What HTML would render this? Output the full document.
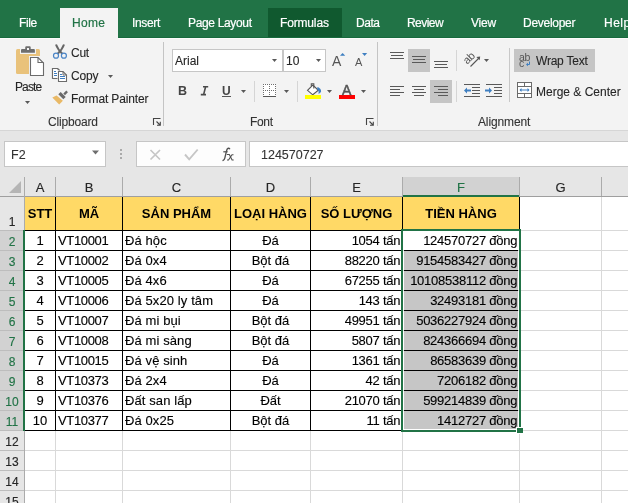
<!DOCTYPE html>
<html><head><meta charset="utf-8">
<style>
*{margin:0;padding:0;box-sizing:border-box}
html,body{width:628px;height:503px;overflow:hidden;background:#e6e6e6;font-family:"Liberation Sans",sans-serif;position:relative}
#wrap{position:absolute;left:0;top:0;width:628px;height:503px;will-change:transform}
.a{position:absolute}
#tabs{left:0;top:0;width:628px;height:38px;background:#217346}
.tab{position:absolute;top:18px;color:#fff;font-size:12px;line-height:10px;white-space:nowrap;-webkit-text-stroke-width:0.2px}
#ribbon{left:0;top:38px;width:628px;height:93px;background:#f3f3f3;border-bottom:1px solid #d6d6d6}
.t{position:absolute;color:#262626;font-size:12px;line-height:10px;white-space:nowrap;-webkit-text-stroke-width:0.1px}
.g{position:absolute;color:#333;font-size:12px;line-height:10px;white-space:nowrap;-webkit-text-stroke-width:0.1px}
.cell{position:absolute;font-size:13px;line-height:22px;color:#000;white-space:nowrap;-webkit-text-stroke:0.12px #000}
.hd{position:absolute;font-size:11.5px;color:#222;text-align:center;white-space:nowrap}
</style></head><body><div id="wrap">
<div id="tabs" class="a">
  <div class="a" style="left:60px;top:8px;width:58px;height:30px;background:#f3f3f3"></div>
  <div class="a" style="left:268px;top:8px;width:74px;height:30px;background:#10592f"></div>
  <div class="tab" style="left:19px;letter-spacing:-0.38px">File</div>
  <div class="tab" style="left:72px;letter-spacing:0.3px;color:#217346">Home</div>
  <div class="tab" style="left:132px;letter-spacing:-0.36px">Insert</div>
  <div class="tab" style="left:188px;letter-spacing:-0.34px">Page Layout</div>
  <div class="tab" style="left:280px;letter-spacing:-0.16px">Formulas</div>
  <div class="tab" style="left:356px;letter-spacing:-0.45px">Data</div>
  <div class="tab" style="left:407px;letter-spacing:-0.56px">Review</div>
  <div class="tab" style="left:471px;letter-spacing:-0.18px">View</div>
  <div class="tab" style="left:523px;letter-spacing:-0.28px">Developer</div>
  <div class="tab" style="left:604px;letter-spacing:0.5px">Help</div>
</div>
<div id="ribbon" class="a"></div>
<div class="a" style="left:0;top:37px;width:628px;height:1px;background:#176a3d"></div>
<div class="a" style="left:0;top:38px;width:628px;height:1px;background:#fbfbfb"></div>
<div class="a" style="left:60px;top:36px;width:58px;height:3px;background:#f3f3f3"></div>
<!-- clipboard group -->
<svg class="a" style="left:0;top:38px" width="628" height="92" viewBox="0 38 628 92">
  <!-- paste clipboard -->
  <rect x="16" y="49" width="24" height="25" rx="1.5" fill="#e9c27b"/>
  <path d="M20 48.5h16v5.5h-16z" fill="#f3f3f3"/>
  <path d="M24.5 45.5h7v3h-7z" fill="#f3f3f3"/>
  <path d="M21 52.8v-2.3c0-1 .5-1.4 1.4-1.4h2.8v-1.5c0-.9.6-1.4 1.4-1.4h2.8c.8 0 1.3.5 1.3 1.4v1.5h2.8c.9 0 1.4.4 1.4 1.4v2.3z" fill="#6e6e6e"/>
  <rect x="27" y="48" width="2" height="2" fill="#f3f3f3"/>
  <path d="M29 56h16v21h-16z" fill="#f3f3f3"/>
  <path d="M30.5 57.5h7.5l5.5 5.5v12.5h-13z" fill="#fff" stroke="#6b6b6b" stroke-width="1.1"/>
  <path d="M38 57.5v5h5.5" fill="none" stroke="#6b6b6b" stroke-width="1.1"/>
  <path d="M25 101h5l-2.5 3z" fill="#595959"/>
  <!-- scissors -->
  <path d="M56 44.5c1 3 3 6 6.5 9.5M64 44.5c-1 3-3 6-6.5 9.5" fill="none" stroke="#666" stroke-width="2"/>
  <circle cx="56" cy="55.7" r="2.5" fill="#f3f3f3" stroke="#4a84c6" stroke-width="1.2"/>
  <circle cx="63.9" cy="55.7" r="2.5" fill="#f3f3f3" stroke="#4a84c6" stroke-width="1.2"/>
  <!-- copy -->
  <path d="M58 78.5h-5.5v-10h5l2.5 2.5" fill="#fff" stroke="#6b6b6b" stroke-width="1.1"/>
  <path d="M52.5 68.5h5v10h-5z" fill="#fff"/>
  <path d="M52.5 78.5v-10h5l2 2" fill="none" stroke="#6b6b6b" stroke-width="1.1"/>
  <path d="M52.5 78.5h5.5" fill="none" stroke="#6b6b6b" stroke-width="1.1"/>
  <path d="M57.5 70.5h9.5v12h-9.5z" fill="#f3f3f3"/>
  <path d="M58.5 71.5h4.5l3.5 3.5v6.5h-8z" fill="#fff" stroke="#6b6b6b" stroke-width="1.1"/>
  <path d="M63 71.5v3.5h3.5" fill="none" stroke="#6b6b6b" stroke-width="1"/>
  <path d="M54 71.5h2M54 73.5h3M54 75.5h3M60 74.5h2M60 76.5h5M60 78.5h5" stroke="#3f7dc0" stroke-width="1"/>
  <path d="M108 75h5l-2.5 3z" fill="#595959"/>
  <!-- format painter -->
  <path d="M52.3 97.6l4.3-2.2l6.3 5.4l-3.7 3.7z" fill="#e9b966"/>
  <path d="M58.3 94.3l2.4-2.4l5 5l-2.4 2.4z" fill="#6a6a6a"/>
  <path d="M63.3 93.5l3-2.9l1.6 1.7l-2.9 2.9z" fill="#6a6a6a"/>
  <!-- clipboard launcher -->
  <path d="M153.5 125v-6.5h7" fill="none" stroke="#444" stroke-width="1.1"/>
  <path d="M156.5 121.5l3.5 3.5M157 125.3h3.3v-3.5" fill="none" stroke="#444" stroke-width="1.1"/>
  <!-- separators -->
  <rect x="163" y="42" width="1" height="84" fill="#c4c4c4"/>
  <rect x="377" y="42" width="1" height="84" fill="#c4c4c4"/>
  <rect x="509" y="48" width="1" height="54" fill="#c8c8c8"/>
  <!-- font name box -->
  <rect x="172.5" y="49.5" width="110" height="22" fill="#fff" stroke="#c6c6c6"/>
  <rect x="283.5" y="49.5" width="42" height="22" fill="#fff" stroke="#c6c6c6"/>
  <path d="M272 59h5l-2.5 3z" fill="#595959"/>
  <path d="M316 59h5l-2.5 3z" fill="#595959"/>
  <!-- grow/shrink font -->
  <path d="M340 55.8l2.6-2.9l2.6 2.9z" fill="#3e7fc1"/>
  <path d="M362 53h5.2l-2.6 3z" fill="#3e7fc1"/>
  <!-- font row2 -->
  <path d="M241 90h5l-2.5 3z" fill="#595959"/>
  <rect x="254" y="81" width="1" height="21" fill="#d5d5d5"/>
  <g fill="#8a8a8a">
  </g>
  <rect x="263" y="84" width="13" height="12" fill="#fff"/>
  <path d="M263 84h1v1h-1zM263 90h1v1h-1zM265 84h1v1h-1zM265 90h1v1h-1zM267 84h1v1h-1zM267 90h1v1h-1zM269 84h1v1h-1zM269 90h1v1h-1zM271 84h1v1h-1zM271 90h1v1h-1zM273 84h1v1h-1zM273 90h1v1h-1zM275 84h1v1h-1zM275 90h1v1h-1zM263 86h1v1h-1zM263 88h1v1h-1zM263 92h1v1h-1zM263 94h1v1h-1zM269 86h1v1h-1zM269 88h1v1h-1zM269 92h1v1h-1zM269 94h1v1h-1zM275 86h1v1h-1zM275 88h1v1h-1zM275 92h1v1h-1zM275 94h1v1h-1z" fill="#6e6e6e"/>
  <rect x="263" y="96" width="13" height="1" fill="#555"/>
  <path d="M284 90h5l-2.5 3z" fill="#595959"/>
  <rect x="297" y="81" width="1" height="21" fill="#d5d5d5"/>
  <!-- fill color -->
  <path d="M307.5 90.3l5.3-5.3l5.5 5.3l-5.5 4.5z" fill="#fff" stroke="#555" stroke-width="1.1"/>
  <path d="M311.3 86v-2.3h2.5v4.8" fill="none" stroke="#555" stroke-width="1.1"/>
  <path d="M317.5 87c2.2.6 3.8 2.8 3.6 4.3c-.3 1.3-1.3 2.2-2.7 2.4c.6-1.8.2-3.3-1.3-4.5z" fill="#3e7fc1"/>
  <rect x="305" y="95" width="16" height="4" fill="#ffff00"/>
  <path d="M327 90h5l-2.5 3z" fill="#595959"/>
  <!-- font color -->
  <rect x="339" y="95" width="16" height="4" fill="#ff0000"/>
  <path d="M361 90h5l-2.5 3z" fill="#595959"/>
  <!-- font launcher -->
  <path d="M366.5 125v-6.5h7" fill="none" stroke="#444" stroke-width="1.1"/>
  <path d="M369.5 121.5l3.5 3.5M370 125.3h3.3v-3.5" fill="none" stroke="#444" stroke-width="1.1"/>
  <!-- alignment -->
  <g stroke="#595959" stroke-width="1">
    <path d="M390 52.5h14M391 55.5h12M390 58.5h14"/>
  </g>
  <rect x="408" y="49" width="22" height="23" fill="#c5c5c5"/>
  <g stroke="#595959" stroke-width="1">
    <path d="M412 56.5h14M413 59.5h12M412 62.5h14"/>
    <path d="M434 61.5h14M435 64.5h12M434 67.5h14"/>
  </g>
  <rect x="456" y="50" width="1" height="21" fill="#d5d5d5"/>
  <rect x="456" y="81" width="1" height="21" fill="#d5d5d5"/>
  <!-- orientation -->
  <path d="M470.5 66.5l9-9" stroke="#555" stroke-width="1.1"/>
  <path d="M480.2 56.5l-3.8 0.6l3.2 3.2z" fill="#555"/>
  <text x="0" y="0" transform="translate(467.3 64.8) rotate(-45)" font-family="Liberation Sans" font-size="11" fill="#555" letter-spacing="-0.3">ab</text>
  <path d="M484 59h5l-2.5 3z" fill="#595959"/>
  <rect x="430" y="80" width="22" height="23" fill="#c5c5c5"/>
  <g stroke="#595959" stroke-width="1">
    <path d="M390 86.5h14M390 89.5h10M390 92.5h14M390 95.5h10"/>
    <path d="M412 86.5h14M414 89.5h10M412 92.5h14M414 95.5h10"/>
    <path d="M434 86.5h14M438 89.5h10M434 92.5h14M438 95.5h10"/>
  </g>
  <g stroke="#595959" stroke-width="1">
    <path d="M464 84.5h16M472 87.5h8M472 90.5h8M472 93.5h8M464 96.5h16"/>
    <path d="M486 84.5h16M494 87.5h8M494 90.5h8M494 93.5h8M486 96.5h16"/>
  </g>
  <path d="M464 90.5l3-3v2h4v2h-4v2z" fill="#3e7fc1"/>
  <path d="M492 90.5l-3-3v2h-4v2h4v2z" fill="#3e7fc1"/>
  <!-- wrap text -->
  <rect x="514" y="49" width="81" height="23" fill="#c5c5c5"/>
  <path d="M529.5 61.5v3h-2.5" fill="none" stroke="#3e7fc1" stroke-width="1"/>
  <path d="M526 64.5l2-1.8v3.6z" fill="#3e7fc1"/>
  <!-- merge -->
  <rect x="517.5" y="82.5" width="14" height="15" fill="#fff" stroke="#6b6b6b"/>
  <path d="M517.5 86.5h14M517.5 93.5h14M524.5 82.5v4M524.5 93.5v4" stroke="#6b6b6b"/>
  <path d="M520 90h9" stroke="#3e7fc1"/>
  <path d="M519.5 90l2-2v4zM529.5 90l-2-2v4z" fill="#3e7fc1"/>
</svg>
<div class="t" style="left:15px;top:82px;letter-spacing:-0.9px">Paste</div>
<div class="t" style="left:71px;top:48px;letter-spacing:-0.24px">Cut</div>
<div class="t" style="left:71px;top:71px;letter-spacing:-0.14px">Copy</div>
<div class="t" style="left:71px;top:94px;letter-spacing:-0.15px">Format Painter</div>
<div class="g" style="left:48px;top:117px;letter-spacing:-0.17px">Clipboard</div>
<div class="g" style="left:250px;top:117px;letter-spacing:-0.34px">Font</div>
<div class="g" style="left:478px;top:117px;letter-spacing:-0.13px">Alignment</div>
<div class="t" style="left:175px;top:56px">Arial</div>
<div class="t" style="left:286px;top:56px">10</div>
<div class="t" style="left:536px;top:56px;letter-spacing:-0.23px">Wrap Text</div>
<div class="t" style="left:536px;top:87px">Merge &amp; Center</div>
<div class="a" style="left:178px;top:86px;font:bold 12.5px/10px 'Liberation Sans',sans-serif;color:#444">B</div>
<svg class="a" style="left:198px;top:84px" width="14" height="14"><path d="M5 2.8h5.2M2.8 10.6h5.2M7.6 2.8l-2 7.8" fill="none" stroke="#4a4a4a" stroke-width="1.6"/></svg>
<div class="a" style="left:222px;top:86px;font:bold 12px/10px 'Liberation Sans',sans-serif;color:#444">U</div>
<div class="a" style="left:222px;top:96px;width:9px;height:1px;background:#555"></div>
<div class="a" style="left:332px;top:56px;font:14px/10px 'Liberation Sans',sans-serif;color:#555">A</div>
<div class="a" style="left:355px;top:57px;font:11px/10px 'Liberation Sans',sans-serif;color:#555">A</div>
<div class="a" style="left:342px;top:85px;font:14px/11px 'Liberation Sans',sans-serif;color:#555;-webkit-text-stroke-width:0.5px">A</div>
<div class="a" style="left:519px;top:54px;font:10.5px/7px 'Liberation Sans',sans-serif;color:#555;letter-spacing:-0.3px">ab</div>
<div class="a" style="left:519px;top:58px;font:10.5px/10px 'Liberation Sans',sans-serif;color:#555">c</div>
<div class="a" style="left:4px;top:141px;width:102px;height:26px;background:#fff;border:1px solid #c6c6c6"></div>
<div class="t" style="left:11px;top:150px;font-size:12.5px;color:#333">F2</div>
<svg class="a" style="left:90px;top:149px" width="12" height="8"><path d="M2 1.5h7l-3.5 4z" fill="#6e6e6e"/></svg>
<div class="a" style="left:120px;top:149px;width:2px;height:2px;background:#aaa"></div>
<div class="a" style="left:120px;top:153px;width:2px;height:2px;background:#aaa"></div>
<div class="a" style="left:120px;top:157px;width:2px;height:2px;background:#aaa"></div>
<div class="a" style="left:136px;top:141px;width:110px;height:26px;background:#fdfdfd;border:1px solid #c6c6c6"></div>
<svg class="a" style="left:136px;top:141px" width="110" height="26">
  <path d="M14.5 9l9.5 9.5M24 9l-9.5 9.5" stroke="#c6c6c6" stroke-width="1.7"/>
  <path d="M49 13.5l4.2 4.8l8.5-9.8" fill="none" stroke="#c6c6c6" stroke-width="1.9"/>
</svg>
<svg class="a" style="left:216px;top:144px" width="22" height="20"><path d="M13.8 5.2c-.3-1-1.6-1.4-2.4-.4c-.6.7-.9 2-1.3 3.8l-1.3 5.6c-.4 1.7-1 2.5-2.3 2.2" fill="none" stroke="#505050" stroke-width="1.35"/><path d="M7.3 7.8h4.4" stroke="#505050" stroke-width="1.2"/><path d="M10.8 10.5h2.5l2.8 5.5h1.6M11 16h1.5l3.5-5.2h1.5" fill="none" stroke="#505050" stroke-width="1.1"/></svg>
<div class="a" style="left:249px;top:141px;width:390px;height:26px;background:#fff;border:1px solid #c6c6c6"></div>
<div class="t" style="left:261px;top:150px;font-size:12.5px;color:#333">124570727</div>
<div class="a" style="left:0;top:177px;width:628px;height:326px;background:#fff"></div>
<div class="a" style="left:0;top:177px;width:628px;height:19px;background:#e6e6e6"></div>
<div class="a" style="left:403px;top:177px;width:116px;height:19px;background:#d2d2d2"></div>
<div class="a" style="left:0;top:197px;width:24px;height:306px;background:#e6e6e6"></div>
<div class="a" style="left:0;top:231px;width:23px;height:199px;background:#d2d2d2"></div>
<svg class="a" style="left:0;top:177px" width="24" height="19"><path d="M21 4v12h-12z" fill="#b5b5b5"/></svg>
<div class="a" style="left:55px;top:197px;width:1px;height:306px;background:#d9d9d9"></div>
<div class="a" style="left:122px;top:197px;width:1px;height:306px;background:#d9d9d9"></div>
<div class="a" style="left:230px;top:197px;width:1px;height:306px;background:#d9d9d9"></div>
<div class="a" style="left:310px;top:197px;width:1px;height:306px;background:#d9d9d9"></div>
<div class="a" style="left:402px;top:197px;width:1px;height:306px;background:#d9d9d9"></div>
<div class="a" style="left:519px;top:197px;width:1px;height:306px;background:#d9d9d9"></div>
<div class="a" style="left:601px;top:197px;width:1px;height:306px;background:#d9d9d9"></div>
<div class="a" style="left:700px;top:197px;width:1px;height:306px;background:#d9d9d9"></div>
<div class="a" style="left:25px;top:230px;width:603px;height:1px;background:#d9d9d9"></div>
<div class="a" style="left:25px;top:250px;width:603px;height:1px;background:#d9d9d9"></div>
<div class="a" style="left:25px;top:270px;width:603px;height:1px;background:#d9d9d9"></div>
<div class="a" style="left:25px;top:290px;width:603px;height:1px;background:#d9d9d9"></div>
<div class="a" style="left:25px;top:310px;width:603px;height:1px;background:#d9d9d9"></div>
<div class="a" style="left:25px;top:330px;width:603px;height:1px;background:#d9d9d9"></div>
<div class="a" style="left:25px;top:350px;width:603px;height:1px;background:#d9d9d9"></div>
<div class="a" style="left:25px;top:370px;width:603px;height:1px;background:#d9d9d9"></div>
<div class="a" style="left:25px;top:390px;width:603px;height:1px;background:#d9d9d9"></div>
<div class="a" style="left:25px;top:410px;width:603px;height:1px;background:#d9d9d9"></div>
<div class="a" style="left:25px;top:430px;width:603px;height:1px;background:#d9d9d9"></div>
<div class="a" style="left:25px;top:450px;width:603px;height:1px;background:#d9d9d9"></div>
<div class="a" style="left:25px;top:470px;width:603px;height:1px;background:#d9d9d9"></div>
<div class="a" style="left:25px;top:490px;width:603px;height:1px;background:#d9d9d9"></div>
<div class="a" style="left:25px;top:510px;width:603px;height:1px;background:#d9d9d9"></div>
<div class="a" style="left:24px;top:177px;width:1px;height:19px;background:#ababab"></div>
<div class="a" style="left:55px;top:177px;width:1px;height:19px;background:#ababab"></div>
<div class="a" style="left:122px;top:177px;width:1px;height:19px;background:#ababab"></div>
<div class="a" style="left:230px;top:177px;width:1px;height:19px;background:#ababab"></div>
<div class="a" style="left:310px;top:177px;width:1px;height:19px;background:#ababab"></div>
<div class="a" style="left:402px;top:177px;width:1px;height:19px;background:#ababab"></div>
<div class="a" style="left:519px;top:177px;width:1px;height:19px;background:#ababab"></div>
<div class="a" style="left:601px;top:177px;width:1px;height:19px;background:#ababab"></div>
<div class="a" style="left:0;top:196px;width:628px;height:1px;background:#9f9f9f"></div>
<div class="a" style="left:0;top:230px;width:24px;height:1px;background:#bdbdbd"></div>
<div class="a" style="left:0;top:250px;width:24px;height:1px;background:#bdbdbd"></div>
<div class="a" style="left:0;top:270px;width:24px;height:1px;background:#bdbdbd"></div>
<div class="a" style="left:0;top:290px;width:24px;height:1px;background:#bdbdbd"></div>
<div class="a" style="left:0;top:310px;width:24px;height:1px;background:#bdbdbd"></div>
<div class="a" style="left:0;top:330px;width:24px;height:1px;background:#bdbdbd"></div>
<div class="a" style="left:0;top:350px;width:24px;height:1px;background:#bdbdbd"></div>
<div class="a" style="left:0;top:370px;width:24px;height:1px;background:#bdbdbd"></div>
<div class="a" style="left:0;top:390px;width:24px;height:1px;background:#bdbdbd"></div>
<div class="a" style="left:0;top:410px;width:24px;height:1px;background:#bdbdbd"></div>
<div class="a" style="left:0;top:430px;width:24px;height:1px;background:#bdbdbd"></div>
<div class="a" style="left:0;top:450px;width:24px;height:1px;background:#bdbdbd"></div>
<div class="a" style="left:0;top:470px;width:24px;height:1px;background:#bdbdbd"></div>
<div class="a" style="left:0;top:490px;width:24px;height:1px;background:#bdbdbd"></div>
<div class="a" style="left:0;top:510px;width:24px;height:1px;background:#bdbdbd"></div>
<div class="a" style="left:24px;top:177px;width:1px;height:326px;background:#ababab"></div>
<div class="a" style="left:25px;top:197px;width:494px;height:33px;background:#ffd966"></div>
<div class="a" style="left:404px;top:251px;width:114px;height:178px;background:#c6c6c6"></div>
<div class="a" style="left:55px;top:197px;width:1px;height:234px;background:#000"></div>
<div class="a" style="left:122px;top:197px;width:1px;height:234px;background:#000"></div>
<div class="a" style="left:230px;top:197px;width:1px;height:234px;background:#000"></div>
<div class="a" style="left:310px;top:197px;width:1px;height:234px;background:#000"></div>
<div class="a" style="left:402px;top:197px;width:1px;height:234px;background:#000"></div>
<div class="a" style="left:519px;top:197px;width:1px;height:234px;background:#000"></div>
<div class="a" style="left:25px;top:230px;width:377px;height:1px;background:#000"></div>
<div class="a" style="left:403px;top:230px;width:116px;height:1px;background:#000"></div>
<div class="a" style="left:25px;top:250px;width:377px;height:1px;background:#000"></div>
<div class="a" style="left:404px;top:250px;width:114px;height:1px;background:#000"></div>
<div class="a" style="left:25px;top:270px;width:377px;height:1px;background:#000"></div>
<div class="a" style="left:404px;top:270px;width:114px;height:1px;background:#000"></div>
<div class="a" style="left:25px;top:290px;width:377px;height:1px;background:#000"></div>
<div class="a" style="left:404px;top:290px;width:114px;height:1px;background:#000"></div>
<div class="a" style="left:25px;top:310px;width:377px;height:1px;background:#000"></div>
<div class="a" style="left:404px;top:310px;width:114px;height:1px;background:#000"></div>
<div class="a" style="left:25px;top:330px;width:377px;height:1px;background:#000"></div>
<div class="a" style="left:404px;top:330px;width:114px;height:1px;background:#000"></div>
<div class="a" style="left:25px;top:350px;width:377px;height:1px;background:#000"></div>
<div class="a" style="left:404px;top:350px;width:114px;height:1px;background:#000"></div>
<div class="a" style="left:25px;top:370px;width:377px;height:1px;background:#000"></div>
<div class="a" style="left:404px;top:370px;width:114px;height:1px;background:#000"></div>
<div class="a" style="left:25px;top:390px;width:377px;height:1px;background:#000"></div>
<div class="a" style="left:404px;top:390px;width:114px;height:1px;background:#000"></div>
<div class="a" style="left:25px;top:410px;width:377px;height:1px;background:#000"></div>
<div class="a" style="left:404px;top:410px;width:114px;height:1px;background:#000"></div>
<div class="a" style="left:25px;top:430px;width:377px;height:1px;background:#000"></div>
<div class="a" style="left:403px;top:430px;width:116px;height:1px;background:#000"></div>
<div class="hd" style="left:25px;top:177px;width:30px;height:19px;line-height:19px;padding-top:1px;font-size:13px;-webkit-text-stroke-width:0.15px;color:#262626">A</div>
<div class="hd" style="left:56px;top:177px;width:66px;height:19px;line-height:19px;padding-top:1px;font-size:13px;-webkit-text-stroke-width:0.15px;color:#262626">B</div>
<div class="hd" style="left:123px;top:177px;width:107px;height:19px;line-height:19px;padding-top:1px;font-size:13px;-webkit-text-stroke-width:0.15px;color:#262626">C</div>
<div class="hd" style="left:231px;top:177px;width:79px;height:19px;line-height:19px;padding-top:1px;font-size:13px;-webkit-text-stroke-width:0.15px;color:#262626">D</div>
<div class="hd" style="left:311px;top:177px;width:91px;height:19px;line-height:19px;padding-top:1px;font-size:13px;-webkit-text-stroke-width:0.15px;color:#262626">E</div>
<div class="hd" style="left:403px;top:177px;width:116px;height:19px;line-height:19px;padding-top:1px;font-size:13px;-webkit-text-stroke-width:0.15px;color:#217346">F</div>
<div class="hd" style="left:520px;top:177px;width:81px;height:19px;line-height:19px;padding-top:1px;font-size:13px;-webkit-text-stroke-width:0.15px;color:#262626">G</div>
<div class="hd" style="left:602px;top:177px;width:98px;height:19px;line-height:19px;padding-top:1px;font-size:13px;-webkit-text-stroke-width:0.15px;color:#262626">H</div>
<div class="hd" style="left:0;top:210px;width:24px;height:20px;line-height:20px;color:#262626;padding-top:2px;font-size:12px;-webkit-text-stroke-width:0.15px">1</div>
<div class="hd" style="left:0;top:230px;width:24px;height:20px;line-height:20px;color:#217346;padding-top:2px;font-size:12px;-webkit-text-stroke-width:0.15px">2</div>
<div class="hd" style="left:0;top:250px;width:24px;height:20px;line-height:20px;color:#217346;padding-top:2px;font-size:12px;-webkit-text-stroke-width:0.15px">3</div>
<div class="hd" style="left:0;top:270px;width:24px;height:20px;line-height:20px;color:#217346;padding-top:2px;font-size:12px;-webkit-text-stroke-width:0.15px">4</div>
<div class="hd" style="left:0;top:290px;width:24px;height:20px;line-height:20px;color:#217346;padding-top:2px;font-size:12px;-webkit-text-stroke-width:0.15px">5</div>
<div class="hd" style="left:0;top:310px;width:24px;height:20px;line-height:20px;color:#217346;padding-top:2px;font-size:12px;-webkit-text-stroke-width:0.15px">6</div>
<div class="hd" style="left:0;top:330px;width:24px;height:20px;line-height:20px;color:#217346;padding-top:2px;font-size:12px;-webkit-text-stroke-width:0.15px">7</div>
<div class="hd" style="left:0;top:350px;width:24px;height:20px;line-height:20px;color:#217346;padding-top:2px;font-size:12px;-webkit-text-stroke-width:0.15px">8</div>
<div class="hd" style="left:0;top:370px;width:24px;height:20px;line-height:20px;color:#217346;padding-top:2px;font-size:12px;-webkit-text-stroke-width:0.15px">9</div>
<div class="hd" style="left:0;top:390px;width:24px;height:20px;line-height:20px;color:#217346;padding-top:2px;font-size:12px;-webkit-text-stroke-width:0.15px">10</div>
<div class="hd" style="left:0;top:410px;width:24px;height:20px;line-height:20px;color:#217346;padding-top:2px;font-size:12px;-webkit-text-stroke-width:0.15px">11</div>
<div class="hd" style="left:0;top:430px;width:24px;height:20px;line-height:20px;color:#262626;padding-top:2px;font-size:12px;-webkit-text-stroke-width:0.15px">12</div>
<div class="hd" style="left:0;top:450px;width:24px;height:20px;line-height:20px;color:#262626;padding-top:2px;font-size:12px;-webkit-text-stroke-width:0.15px">13</div>
<div class="hd" style="left:0;top:470px;width:24px;height:20px;line-height:20px;color:#262626;padding-top:2px;font-size:12px;-webkit-text-stroke-width:0.15px">14</div>
<div class="hd" style="left:0;top:490px;width:24px;height:20px;line-height:20px;color:#262626;padding-top:2px;font-size:12px;-webkit-text-stroke-width:0.15px">15</div>
<div class="a" style="left:401px;top:229px;width:2px;height:203px;background:#217346"></div>
<div class="a" style="left:519px;top:229px;width:2px;height:198px;background:#217346"></div>
<div class="a" style="left:401px;top:229px;width:120px;height:2px;background:#217346"></div>
<div class="a" style="left:401px;top:430px;width:116px;height:2px;background:#217346"></div>
<div class="a" style="left:516px;top:427px;width:7px;height:7px;background:#fff"></div>
<div class="a" style="left:517px;top:428px;width:6px;height:5px;background:#217346"></div>
<div class="a" style="left:403px;top:195px;width:116px;height:2px;background:#217346"></div>
<div class="a" style="left:23px;top:230px;width:2px;height:201px;background:#217346"></div>
<div class="cell" style="left:25px;top:203px;width:30px;text-align:center;font-weight:bold;-webkit-text-stroke:0">STT</div>
<div class="cell" style="left:56px;top:203px;width:66px;text-align:center;font-weight:bold;-webkit-text-stroke:0">MÃ</div>
<div class="cell" style="left:123px;top:203px;width:107px;text-align:center;font-weight:bold;-webkit-text-stroke:0">SẢN PHẨM</div>
<div class="cell" style="left:231px;top:203px;width:79px;text-align:center;font-weight:bold;-webkit-text-stroke:0">LOẠI HÀNG</div>
<div class="cell" style="left:311px;top:203px;width:91px;text-align:center;font-weight:bold;-webkit-text-stroke:0">SỐ LƯỢNG</div>
<div class="cell" style="left:403px;top:203px;width:116px;text-align:center;font-weight:bold;-webkit-text-stroke:0">TIỀN HÀNG</div>
<div class="cell" style="left:25px;top:230px;width:30px;text-align:center">1</div>
<div class="cell" style="left:58px;top:230px;letter-spacing:-0.35px">VT10001</div>
<div class="cell" style="left:125px;top:230px;letter-spacing:0.1px">Đá hộc</div>
<div class="cell" style="left:231px;top:230px;width:79px;text-align:center">Đá</div>
<div class="cell" style="right:227.75px;top:230px;text-align:right;letter-spacing:-0.25px">1054 tấn</div>
<div class="cell" style="right:110.75px;top:230px;text-align:right;letter-spacing:-0.25px">124570727 đồng</div>
<div class="cell" style="left:25px;top:250px;width:30px;text-align:center">2</div>
<div class="cell" style="left:58px;top:250px;letter-spacing:-0.35px">VT10002</div>
<div class="cell" style="left:125px;top:250px;letter-spacing:0.1px">Đá 0x4</div>
<div class="cell" style="left:231px;top:250px;width:79px;text-align:center">Bột đá</div>
<div class="cell" style="right:227.75px;top:250px;text-align:right;letter-spacing:-0.25px">88220 tấn</div>
<div class="cell" style="right:110.75px;top:250px;text-align:right;letter-spacing:-0.25px">9154583427 đồng</div>
<div class="cell" style="left:25px;top:270px;width:30px;text-align:center">3</div>
<div class="cell" style="left:58px;top:270px;letter-spacing:-0.35px">VT10005</div>
<div class="cell" style="left:125px;top:270px;letter-spacing:0.1px">Đá 4x6</div>
<div class="cell" style="left:231px;top:270px;width:79px;text-align:center">Đá</div>
<div class="cell" style="right:227.75px;top:270px;text-align:right;letter-spacing:-0.25px">67255 tấn</div>
<div class="cell" style="right:110.75px;top:270px;text-align:right;letter-spacing:-0.25px">10108538112 đồng</div>
<div class="cell" style="left:25px;top:290px;width:30px;text-align:center">4</div>
<div class="cell" style="left:58px;top:290px;letter-spacing:-0.35px">VT10006</div>
<div class="cell" style="left:125px;top:290px;letter-spacing:0.1px">Đá 5x20 ly tâm</div>
<div class="cell" style="left:231px;top:290px;width:79px;text-align:center">Đá</div>
<div class="cell" style="right:227.75px;top:290px;text-align:right;letter-spacing:-0.25px">143 tấn</div>
<div class="cell" style="right:110.75px;top:290px;text-align:right;letter-spacing:-0.25px">32493181 đồng</div>
<div class="cell" style="left:25px;top:310px;width:30px;text-align:center">5</div>
<div class="cell" style="left:58px;top:310px;letter-spacing:-0.35px">VT10007</div>
<div class="cell" style="left:125px;top:310px;letter-spacing:0.1px">Đá mi bụi</div>
<div class="cell" style="left:231px;top:310px;width:79px;text-align:center">Bột đá</div>
<div class="cell" style="right:227.75px;top:310px;text-align:right;letter-spacing:-0.25px">49951 tấn</div>
<div class="cell" style="right:110.75px;top:310px;text-align:right;letter-spacing:-0.25px">5036227924 đồng</div>
<div class="cell" style="left:25px;top:330px;width:30px;text-align:center">6</div>
<div class="cell" style="left:58px;top:330px;letter-spacing:-0.35px">VT10008</div>
<div class="cell" style="left:125px;top:330px;letter-spacing:0.1px">Đá mi sàng</div>
<div class="cell" style="left:231px;top:330px;width:79px;text-align:center">Bột đá</div>
<div class="cell" style="right:227.75px;top:330px;text-align:right;letter-spacing:-0.25px">5807 tấn</div>
<div class="cell" style="right:110.75px;top:330px;text-align:right;letter-spacing:-0.25px">824366694 đồng</div>
<div class="cell" style="left:25px;top:350px;width:30px;text-align:center">7</div>
<div class="cell" style="left:58px;top:350px;letter-spacing:-0.35px">VT10015</div>
<div class="cell" style="left:125px;top:350px;letter-spacing:0.1px">Đá vệ sinh</div>
<div class="cell" style="left:231px;top:350px;width:79px;text-align:center">Đá</div>
<div class="cell" style="right:227.75px;top:350px;text-align:right;letter-spacing:-0.25px">1361 tấn</div>
<div class="cell" style="right:110.75px;top:350px;text-align:right;letter-spacing:-0.25px">86583639 đồng</div>
<div class="cell" style="left:25px;top:370px;width:30px;text-align:center">8</div>
<div class="cell" style="left:58px;top:370px;letter-spacing:-0.35px">VT10373</div>
<div class="cell" style="left:125px;top:370px;letter-spacing:0.1px">Đá 2x4</div>
<div class="cell" style="left:231px;top:370px;width:79px;text-align:center">Đá</div>
<div class="cell" style="right:227.75px;top:370px;text-align:right;letter-spacing:-0.25px">42 tấn</div>
<div class="cell" style="right:110.75px;top:370px;text-align:right;letter-spacing:-0.25px">7206182 đồng</div>
<div class="cell" style="left:25px;top:390px;width:30px;text-align:center">9</div>
<div class="cell" style="left:58px;top:390px;letter-spacing:-0.35px">VT10376</div>
<div class="cell" style="left:125px;top:390px;letter-spacing:0.1px">Đất san lấp</div>
<div class="cell" style="left:231px;top:390px;width:79px;text-align:center">Đất</div>
<div class="cell" style="right:227.75px;top:390px;text-align:right;letter-spacing:-0.25px">21070 tấn</div>
<div class="cell" style="right:110.75px;top:390px;text-align:right;letter-spacing:-0.25px">599214839 đồng</div>
<div class="cell" style="left:25px;top:410px;width:30px;text-align:center">10</div>
<div class="cell" style="left:58px;top:410px;letter-spacing:-0.35px">VT10377</div>
<div class="cell" style="left:125px;top:410px;letter-spacing:0.1px">Đá 0x25</div>
<div class="cell" style="left:231px;top:410px;width:79px;text-align:center">Bột đá</div>
<div class="cell" style="right:227.75px;top:410px;text-align:right;letter-spacing:-0.25px">11 tấn</div>
<div class="cell" style="right:110.75px;top:410px;text-align:right;letter-spacing:-0.25px">1412727 đồng</div>
</div></body></html>
